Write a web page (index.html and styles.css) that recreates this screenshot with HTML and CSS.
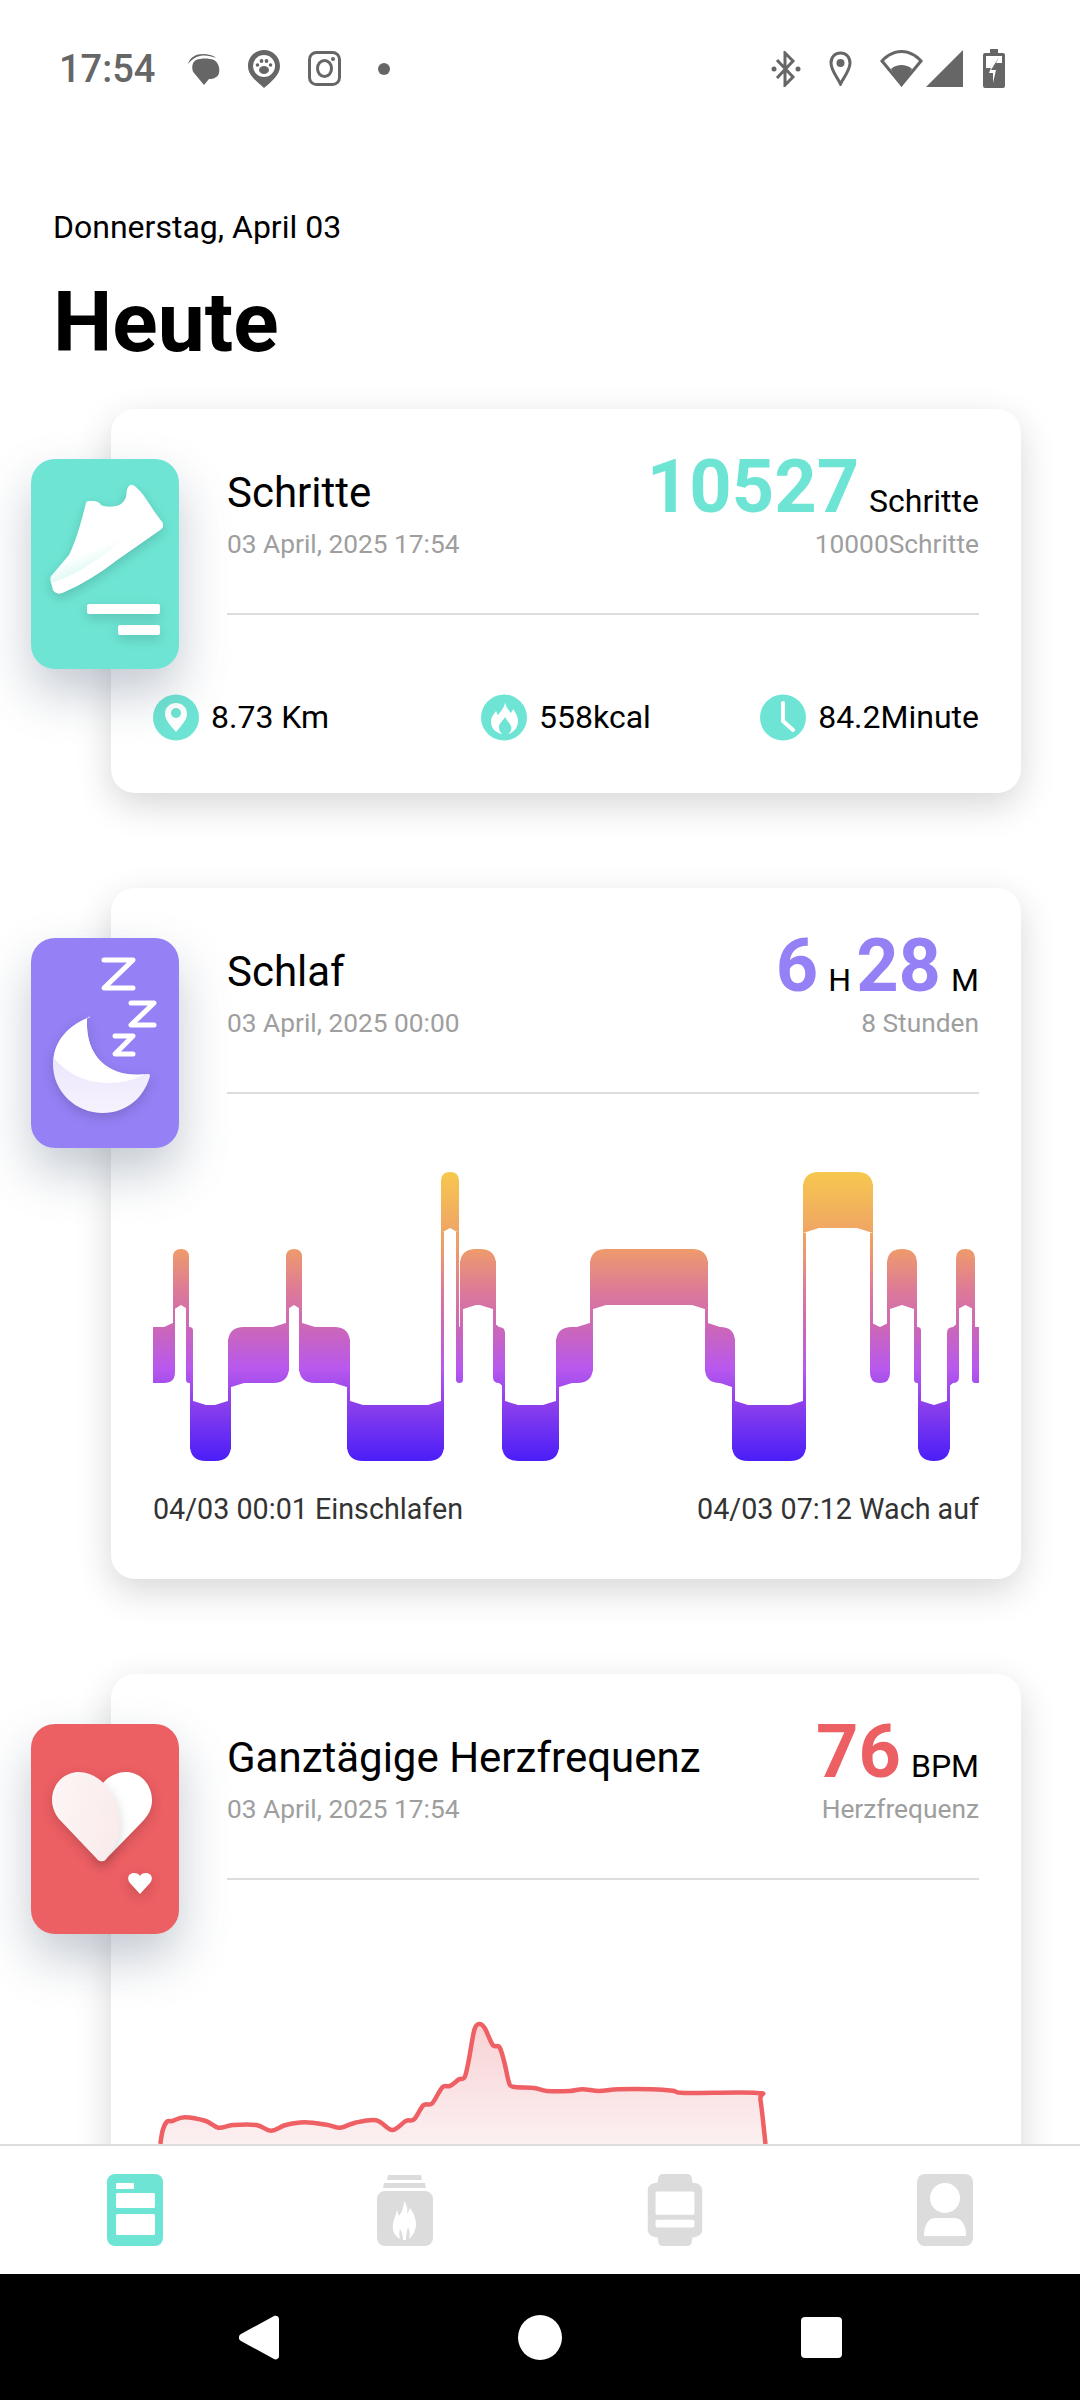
FILE: index.html
```html
<!doctype html>
<html lang="de">
    <head>
        <meta charset="UTF-8" />
        <meta name="viewport" content="width=device-width, initial-scale=1.0" />
        <title>Heute</title>
        <link rel="stylesheet" href="styles.css">
    </head>
    <body>
        <div class="status-bar">
            <div class="status-group">
                <span class="status-time">17:54</span>
                <svg class="st-msg" viewBox="0 0 32 32"><path d="M0 11C2 4 8 1 15 1c5 0 10 1 13 4-5-2-11-3-16-2C7 4 3 7 0 11z"/><path d="M16 32 6 20C3 16 4 9 8 7c5-2 13-2 18 0 5 3 6 9 5 13-1 4-5 6-10 6z"/></svg>
                <svg class="st-pin" viewBox="0 0 32 38"><path d="M16 0C7 0 0 7 0 16c0 9 8 15 16 22 8-7 16-13 16-22C32 7 25 0 16 0z"/><circle cx="16" cy="16" r="11" fill="#fff"/><ellipse cx="16" cy="20" rx="5" ry="4"/><circle cx="9.500" cy="15" r="1.800"/><circle cx="13.500" cy="11" r="1.900"/><circle cx="18.500" cy="11" r="1.900"/><circle cx="22.500" cy="15" r="1.800"/></svg>
                <svg class="st-insta" viewBox="0 0 33 35"><rect x="1.500" y="1.500" width="30" height="32" rx="7" fill="none" stroke="currentColor" stroke-width="3"/><ellipse cx="16.500" cy="17.500" rx="7" ry="8" fill="none" stroke="currentColor" stroke-width="3"/><circle cx="25" cy="8" r="2"/></svg>
                <span class="status-dot"></span>
            </div>
            <div class="status-group status-right">
                <svg class="st-bt" viewBox="0 0 30 36"><path d="M6 9 22 26 14 34V2l8 8L6 27" fill="none" stroke="currentColor" stroke-width="3"/><circle cx="3" cy="18" r="2.500"/><circle cx="27" cy="18" r="2.500"/></svg>
                <svg class="st-loc" viewBox="0 0 23 35"><path d="M11.500 2C6 2 2 6 2 12c0 7 6 14 9.500 21C15 26 21 19 21 12 21 6 17 2 11.500 2z" fill="none" stroke="currentColor" stroke-width="3"/><circle cx="11.500" cy="12" r="4"/></svg>
                <svg class="st-wifi" viewBox="0 0 43 37"><path d="M21.500 37 0 11C6 4 13 0 21.500 0S37 4 43 11z"/><path d="M21.500 32 4 11c5-5 11-8 17.500-8S34 6 39 11z" fill="#fff"/><path d="M21.500 37 11 19c3-3 7-4 10.500-4s7.500 1 10.500 4z"/></svg>
                <svg class="st-signal" viewBox="0 0 37 37"><path d="M37 0v37H0z"/></svg>
                <svg class="st-batt" viewBox="0 0 22 39"><path d="M7 0h8v4h5a2 2 0 0 1 2 2v31a2 2 0 0 1-2 2H2a2 2 0 0 1-2-2V6a2 2 0 0 1 2-2h5z"/><path d="M3 7h16v7l-6 0 3-6-8 13h5l-3 13 0-10H6l2-5H3z" fill="#fff"/></svg>
            </div>
        </div>

        <header class="page-head">
            <div class="page-date">Donnerstag, April 03</div>
            <h1>Heute</h1>
        </header>

        <main class="feed">
            <section class="card">
                <div class="tile tile-steps">
                    <svg viewBox="0 0 148 210">
                        <defs>
                            <linearGradient id="shoeShade" x1="0.600" y1="0.500" x2="0.750" y2="0.850">
                                <stop offset="0" stop-color="#fff" />
                                <stop offset="1" stop-color="#b5f1e7" />
                            </linearGradient>
                        </defs>
                        <path class="tile-glyph" d="M98 27c3-3 6 0 10 4 6 6 10 14 15 21l8 11c2 3 1 6-2 8L86 101c-17 13-34 24-55 33-4 1-7 0-9-3l-2-7c-1-4-1-6 1-8l17-20c7-14 12-32 17-52 1-2 2-2 7-2 4 0 6 1 8 4 4 2 10 2 15 1 5-1 8-4 10-9 1-4 0-8 3-11z" fill="url(#shoeShade)" />
                        <path d="M21 124c20-7 44-20 62-37 12-11 25-22 38-34l10 10c2 3 1 6-2 8L86 101c-17 13-34 24-55 33-4 1-7 0-9-3z" fill="#fff" />
                        <rect class="tile-glyph" x="56" y="145" width="73" height="10" rx="2" fill="#fff" />
                        <rect class="tile-glyph" x="87" y="166" width="42" height="10" rx="2" fill="#fff" />
                    </svg>
                </div>
                <div class="card-head">
                    <div class="head-left">
                        <div class="card-title">Schritte</div>
                        <div class="card-sub">03 April, 2025 17:54</div>
                    </div>
                    <div class="head-right">
                        <div class="value-line">
                            <span class="big teal">10527</span><span class="unit">Schritte</span>
                        </div>
                        <div class="card-sub">10000Schritte</div>
                    </div>
                </div>
                <div class="stats">
                    <div class="stat">
                        <svg class="stat-icon" viewBox="0 0 46 47"><circle cx="23" cy="23.500" r="23" fill="#6ee5d4"/><path d="M23 9c-6 0-11 4-11 11 0 6 6 12 11 18 5-6 11-12 11-18 0-7-5-11-11-11z" fill="#fff"/><circle cx="23" cy="19" r="5" fill="#6ee5d4"/></svg>
                        <span>8.73 Km</span>
                    </div>
                    <div class="stat">
                        <svg class="stat-icon" viewBox="0 0 46 47"><circle cx="23" cy="23.500" r="23" fill="#6ee5d4"/><path d="M24 8c1 6 4 8 6 11 1-2 2-3 2-4 3 4 5 8 5 12 0 7-5 12-10 13 3-2 4-5 3-8-1-3-4-5-6-9-2 4-6 6-6 10 0 3 1 5 3 7-6-1-11-6-11-12 0-5 3-8 5-11 1 2 1 3 2 4 3-4 7-8 7-13z" fill="#fff"/></svg>
                        <span>558kcal</span>
                    </div>
                    <div class="stat">
                        <svg class="stat-icon" viewBox="0 0 46 47"><circle cx="23" cy="23.500" r="23" fill="#6ee5d4"/><path d="M23 9v18l10 9" fill="none" stroke="#fff" stroke-width="4" stroke-linecap="round"/></svg>
                        <span>84.2Minute</span>
                    </div>
                </div>
            </section>

            <section class="card">
                <div class="tile tile-sleep">
                    <svg viewBox="0 0 148 210">
                        <defs>
                            <linearGradient id="moonLow" x1="0" y1="0" x2="0" y2="1">
                                <stop offset="0" stop-color="#e4dcfb" />
                                <stop offset="1" stop-color="#f6f3fe" />
                            </linearGradient>
                        </defs>
                        <g class="zzz">
                            <path d="M73 22h29L73 50h29" />
                            <path d="M100 65h23L100 87h23" />
                            <path d="M84 98h18L84 116h18" />
                        </g>
                        <path class="tile-glyph" d="M59 79C34 88 22 107 22 126c0 28 23 49 50 49 23 0 41-15 47-37 0-2-1-2-3-2-32 6-62-11-60-55 0-1 2-3 3-2z" fill="url(#moonLow)" />
                        <path d="M59 79C36 88 24 104 23 120c13 16 33 25 54 25 13 0 26-3 37-9-31 4-60-13-58-55 0-1 2-3 3-2z" fill="#fff" />
                    </svg>
                </div>
                <div class="card-head">
                    <div class="head-left">
                        <div class="card-title">Schlaf</div>
                        <div class="card-sub">03 April, 2025 00:00</div>
                    </div>
                    <div class="head-right">
                        <div class="value-line">
                            <span class="big purple">6</span><span class="unit">H</span><span class="big purple">28</span><span class="unit">M</span>
                        </div>
                        <div class="card-sub">8 Stunden</div>
                    </div>
                </div>
                <svg class="sleep-chart" viewBox="0 0 826 376">
                    <defs>
                        <linearGradient id="sleepGrad" gradientUnits="userSpaceOnUse" x1="0" y1="78" x2="0" y2="367">
                            <stop offset="0" stop-color="#f6c84e" />
                            <stop offset="0.270" stop-color="#ee9a6c" />
                            <stop offset="0.410" stop-color="#dd7a98" />
                            <stop offset="0.540" stop-color="#cb67b8" />
                            <stop offset="0.680" stop-color="#b858ee" />
                            <stop offset="0.810" stop-color="#8a3eec" />
                            <stop offset="1" stop-color="#4a1ef8" />
                        </linearGradient>
                    </defs>
                    <path id="sleep-path" fill="url(#sleepGrad)" />
                </svg>
                <div class="sleep-labels">
                    <span>04/03 00:01 Einschlafen</span>
                    <span>04/03 07:12 Wach auf</span>
                </div>
            </section>

            <section class="card card-last">
                <div class="tile tile-heart">
                    <svg viewBox="0 0 148 210">
                        <defs>
                            <linearGradient id="leafFill" x1="0" y1="0" x2="1" y2="0.300">
                                <stop offset="0" stop-color="#fdf6f6" />
                                <stop offset="1" stop-color="#faecec" />
                            </linearGradient>
                        </defs>
                        <path class="tile-glyph" d="M72 59c6-7 14-11 23-11 14 0 26 12 26 28 0 9-4 16-10 22L75 135c-3 3-6 3-9 0z" fill="#fff" />
                        <path class="tile-glyph" d="M48 48c15 0 29 12 36 28 6 15 6 34-1 47l-8 12c-2 3-6 3-9 0L28 95c-4-5-7-12-7-19 0-16 12-28 27-28z" fill="url(#leafFill)" />
                        <path class="tile-glyph" d="M109 170 99 159c-4-5-1-10 4-10 3 0 5 1 6 3 1-2 3-3 6-3 5 0 8 5 4 10z" fill="#fff" />
                    </svg>
                </div>
                <div class="card-head">
                    <div class="head-left">
                        <div class="card-title">Ganztägige Herzfrequenz</div>
                        <div class="card-sub">03 April, 2025 17:54</div>
                    </div>
                    <div class="head-right">
                        <div class="value-line">
                            <span class="big red">76</span><span class="unit">BPM</span>
                        </div>
                        <div class="card-sub">Herzfrequenz</div>
                    </div>
                </div>
                <svg class="heart-chart" viewBox="0 0 826 264">
                    <defs>
                        <linearGradient id="heartGrad" gradientUnits="userSpaceOnUse" x1="0" y1="144" x2="0" y2="264">
                            <stop offset="0" stop-color="#f8d2d5" />
                            <stop offset="1" stop-color="#fcf0f1" />
                        </linearGradient>
                    </defs>
                    <path id="heart-area" fill="url(#heartGrad)" />
                    <path id="heart-line" fill="none" stroke="#ef6064" stroke-width="4.500" stroke-linejoin="round" />
                </svg>
            </section>
        </main>

        <nav class="tab-bar">
            <div class="tab">
                <svg class="tab-icon" viewBox="0 0 56 72"><path fill="#6ee5d4" d="M8 0h40a8 8 0 0 1 8 8v56a8 8 0 0 1-8 8H8a8 8 0 0 1-8-8V8a8 8 0 0 1 8-8z"/><rect x="9" y="9" width="18" height="6" rx="1" fill="#fff"/><rect x="9" y="19" width="39" height="15" rx="1.500" fill="#fff"/><rect x="9" y="40" width="39" height="21" rx="1.500" fill="#fff"/></svg>
            </div>
            <div class="tab">
                <svg class="tab-icon" viewBox="0 0 56 72"><path d="M11 1h33l1 5H10zM7 9h41l1 5H6zM8 17h40a8 8 0 0 1 8 8v39a8 8 0 0 1-8 8H8a8 8 0 0 1-8-8V25a8 8 0 0 1 8-8z"/><path fill="#fff" d="M27 27c3 4 4 8 3 13 1-1 2-4 3-6 3 4 6 10 6 16 0 6-3 12-7 15 1-4 1-8-1-12-1 4-2 8-2 13h-3c0-4-1-8-3-11-1 3-1 6 0 10-5-3-8-8-7-14 0-5 3-9 4-15 1 2 1 4 2 6 3-4 5-9 5-15z"/></svg>
            </div>
            <div class="tab">
                <svg class="tab-icon" viewBox="0 0 56 74"><path d="M11 3c1-2 2-3 4-3h26c2 0 3 1 4 3l1 6c6 0 10 3 10 8v40c0 5-4 8-10 8l-1 6c-1 2-2 3-4 3H15c-2 0-3-1-4-3l-1-6C4 65 0 62 0 57V17c0-5 4-8 10-8z"/><rect x="8" y="18" width="40" height="24" rx="2" fill="#fff"/><rect x="8" y="47" width="40" height="8" rx="2" fill="#fff"/></svg>
            </div>
            <div class="tab">
                <svg class="tab-icon" viewBox="0 0 56 72"><rect width="56" height="72" rx="8"/><circle cx="28" cy="24" r="15" fill="#fff"/><path fill="#fff" d="M7 62c0-11 4-18 12-18h18c8 0 12 7 12 18z"/></svg>
            </div>
        </nav>

        <div class="sys-bar">
            <svg class="sys-back" viewBox="0 0 40 45"><path d="M2 19 35 1c2-1 5 0 5 3v37c0 3-3 4-5 3L2 26c-3-2-3-5 0-7z"/></svg>
            <span class="sys-home"></span>
            <span class="sys-square"></span>
        </div>

        <script src="charts.js"></script>
    </body>
</html>
```

FILE: styles.css
```css
* {
    box-sizing: border-box;
}

body {
    margin: 0;
    width: 1080px;
    height: 2400px;
    overflow: hidden;
    display: flex;
    flex-direction: column;
    background: white;
    color: black;
    font-family: Roboto, "Noto Sans", sans-serif;
}

.status-bar {
    height: 137px;
    flex: none;
    display: flex;
    justify-content: space-between;
    align-items: center;
    padding: 0 75px 0 59px;
    color: #666;
}

.status-group {
    display: flex;
    align-items: center;
    gap: 28px;
}

.status-group svg {
    display: block;
    fill: #666;
}

.status-time {
    font-size: 38px;
    font-weight: 500;
    margin-right: 5px;
}

.st-msg { width: 32px; height: 32px; }
.st-pin { width: 32px; height: 38px; }
.st-insta { width: 33px; height: 35px; }
.st-bt { width: 30px; height: 36px; }
.st-loc { width: 23px; height: 35px; }
.st-wifi { width: 43px; height: 37px; }
.st-signal { width: 37px; height: 37px; margin-left: -25px; }
.st-batt { width: 22px; height: 39px; margin-left: -8px; }

.status-dot {
    width: 12px;
    height: 12px;
    margin-left: 9px;
    border-radius: 50%;
    background: #666;
}

.page-head {
    flex: none;
    padding: 72px 53px 0;
}

.page-date {
    font-size: 32px;
    line-height: 36px;
}

h1 {
    margin: 30px 0 0;
    padding: 0;
    font-size: 84px;
    line-height: 95px;
    font-weight: 700;
}

.feed {
    flex: 1;
    min-height: 0;
    overflow: hidden;
    display: flex;
    flex-direction: column;
    gap: 95px;
    padding: 39px 59px 0 111px;
}

.card {
    position: relative;
    flex: none;
    background: white;
    border-radius: 24px;
    box-shadow: 0 12px 36px rgba(0, 0, 0, 0.16);
    padding: 0 42px 52px;
}

.tile {
    position: absolute;
    left: -80px;
    top: 50px;
    width: 148px;
    height: 210px;
    border-radius: 24px;
    box-shadow: 0 24px 50px rgba(70, 90, 115, 0.32);
    z-index: 2;
}

.tile svg {
    display: block;
    width: 148px;
    height: 210px;
}

.tile-glyph {
    filter: drop-shadow(0 4px 6px rgba(0, 0, 0, 0.16));
}

.tile-steps { background: #6ee5d4; }
.tile-sleep { background: #9580f5; }
.tile-heart { background: #ec5f63; }

.zzz path {
    fill: none;
    stroke: white;
    stroke-width: 5;
    stroke-linecap: round;
    stroke-linejoin: round;
}

.card-head {
    height: 206px;
    margin-left: 74px;
    display: flex;
    justify-content: space-between;
    border-bottom: 2px solid #ddd;
}

.head-left {
    padding-top: 59px;
}

.card-title {
    font-size: 42px;
    line-height: 50px;
}

.card-sub {
    font-size: 26.300px;
    line-height: 34px;
    color: #9e9e9e;
}

.head-left .card-sub {
    margin-top: 9px;
}

.head-right {
    padding-top: 42px;
    text-align: right;
}

.head-right .card-sub {
    margin-top: 4px;
}

.value-line {
    line-height: 72px;
    height: 72px;
    white-space: nowrap;
}

.big {
    font-size: 74px;
    font-weight: 700;
}

.unit {
    font-size: 32px;
    margin-left: 10px;
}

.unit + .big {
    margin-left: 5px;
}

.teal { color: #6ee5d4; }
.purple { color: #9580f5; }
.red { color: #ec5f63; }

.stats {
    display: grid;
    grid-template-columns: repeat(3, 1fr);
    padding-top: 79px;
}

.stat {
    display: flex;
    align-items: center;
    gap: 12px;
    font-size: 32px;
    line-height: 47px;
}

.stat:nth-child(2) { justify-self: center; }
.stat:nth-child(3) { justify-self: end; }

.stat-icon {
    display: block;
    width: 46px;
    height: 47px;
}

.sleep-chart,
.heart-chart {
    display: block;
    width: 826px;
}

.sleep-chart { height: 376px; }
.heart-chart { height: 264px; }

.sleep-labels {
    display: flex;
    justify-content: space-between;
    margin-top: 21px;
    font-size: 28.700px;
    line-height: 36px;
    color: #333;
}

.tab-bar {
    flex: none;
    height: 130px;
    display: grid;
    grid-template-columns: repeat(4, 1fr);
    align-items: center;
    background: white;
    border-top: 2px solid #ddd;
    position: relative;
    z-index: 5;
}

.tab {
    display: flex;
    justify-content: center;
}

.tab-icon {
    display: block;
    width: 56px;
    height: 72px;
    fill: #dcdcdc;
}

.sys-bar {
    flex: none;
    height: 126px;
    display: flex;
    justify-content: center;
    align-items: center;
    gap: 239px;
    background: black;
}

.sys-back {
    width: 40px;
    height: 45px;
    fill: white;
}

.sys-home {
    width: 44px;
    height: 45px;
    border-radius: 50%;
    background: white;
}

.sys-square {
    width: 41px;
    height: 41px;
    border-radius: 4px;
    background: white;
}
```

FILE: charts.js
```js
// Sleep chart: [level, from, to], neighbours overlap a few px
const sleepSegments = [
    [3, 0, 22], [2, 20, 36], [3, 33, 40], [4, 37, 78], [3, 75, 136],
    [2, 133, 149], [3, 146, 197], [4, 194, 291], [1, 288, 306], [3, 303, 310],
    [2, 307, 343], [3, 340, 352], [4, 349, 406], [3, 403, 440], [2, 437, 555],
    [3, 552, 582], [4, 579, 653], [1, 650, 720], [3, 717, 737], [2, 734, 764],
    [3, 761, 768], [4, 765, 797], [3, 794, 806], [2, 803, 822], [3, 819, 826],
];
const levelTop = { 1: 78, 2: 155, 3: 233, 4: 311 };
const bandHeight = 56;
const flareDrop = 5;

function sideKind(level, other) {
    if (!other) return "square";
    return other[0] < level ? "up" : "down";
}

function segmentPath(seg, prev, next) {
    const [level, x0, x1] = seg;
    const top = levelTop[level];
    const bot = top + bandHeight;
    const w = x1 - x0;
    const r = Math.min(16, w / 2);
    const f = Math.min(16, w / 2);
    const left = sideKind(level, prev);
    const right = sideKind(level, next);
    let d = "";

    if (left === "up") d += `M${x0} ${top - flareDrop}L${x0 + f} ${top}`;
    else if (left === "down") d += `M${x0} ${top + r}Q${x0} ${top} ${x0 + r} ${top}`;
    else d += `M${x0} ${top}`;

    if (right === "up") d += `L${x1 - f} ${top}L${x1} ${top - flareDrop}`;
    else if (right === "down") d += `L${x1 - r} ${top}Q${x1} ${top} ${x1} ${top + r}`;
    else d += `L${x1} ${top}`;

    if (right === "down") d += `L${x1} ${bot + flareDrop}L${x1 - f} ${bot}`;
    else if (right === "up") d += `L${x1} ${bot - r}Q${x1} ${bot} ${x1 - r} ${bot}`;
    else d += `L${x1} ${bot}`;

    if (left === "down") d += `L${x0 + f} ${bot}L${x0} ${bot + flareDrop}`;
    else if (left === "up") d += `L${x0 + r} ${bot}Q${x0} ${bot} ${x0} ${bot - r}`;
    else d += `L${x0} ${bot}`;

    return d + "Z";
}

function stripPath(a, b) {
    const upper = Math.min(a[0], b[0]);
    const lower = Math.max(a[0], b[0]);
    const y0 = levelTop[upper] + 12;
    const y1 = levelTop[lower] + bandHeight - 12;
    return `M${b[1]} ${y0}H${a[2]}V${y1}H${b[1]}Z`;
}

let sleepD = "";
sleepSegments.forEach((seg, i) => {
    const prev = sleepSegments[i - 1];
    const next = sleepSegments[i + 1];
    sleepD += segmentPath(seg, prev, next);
    if (next) sleepD += stripPath(seg, next);
});
document.getElementById("sleep-path").setAttribute("d", sleepD);

// Heart rate line
const heartPoints = [
    [7.3, 264], [9.8, 250], [14, 241.7], [19.1, 241], [31.7, 237.3], [52.8, 241],
    [65.4, 247.7], [80.1, 245], [103.3, 245], [118, 250.7], [132.7, 245],
    [151.7, 242.3], [174.8, 245], [187.4, 247.7], [202.2, 242.7], [223.2, 240.3],
    [239.2, 250], [252.7, 241], [261.1, 239.3], [270.4, 225.3], [279.2, 223.3],
    [289.3, 207.3], [296.9, 206], [306.1, 199.3], [311.6, 197.3], [315.8, 180],
    [321.3, 150], [326.3, 144], [331.8, 148.3], [339.8, 165], [346.5, 167.3],
    [351.6, 183.3], [355.8, 201.7], [360, 206.7], [381, 208], [393.7, 211],
    [416.8, 211], [429.4, 209.3], [446.3, 211], [465.2, 209.3], [498.9, 209.3],
    [519.9, 210.7], [532.6, 213], [604.1, 213], [607.5, 220], [612.5, 264],
];

function smoothLine(pts) {
    let d = `M${pts[0][0]} ${pts[0][1]}`;
    for (let i = 0; i < pts.length - 1; i++) {
        const p0 = pts[i - 1] || pts[i];
        const p1 = pts[i];
        const p2 = pts[i + 1];
        const p3 = pts[i + 2] || p2;
        const c1x = p1[0] + (p2[0] - p0[0]) / 6;
        const c1y = p1[1] + (p2[1] - p0[1]) / 6;
        const c2x = p2[0] - (p3[0] - p1[0]) / 6;
        const c2y = p2[1] - (p3[1] - p1[1]) / 6;
        d += `C${c1x} ${c1y} ${c2x} ${c2y} ${p2[0]} ${p2[1]}`;
    }
    return d;
}

const heartD = smoothLine(heartPoints);
document.getElementById("heart-line").setAttribute("d", heartD);
document.getElementById("heart-area").setAttribute("d", heartD + "Z");
```
